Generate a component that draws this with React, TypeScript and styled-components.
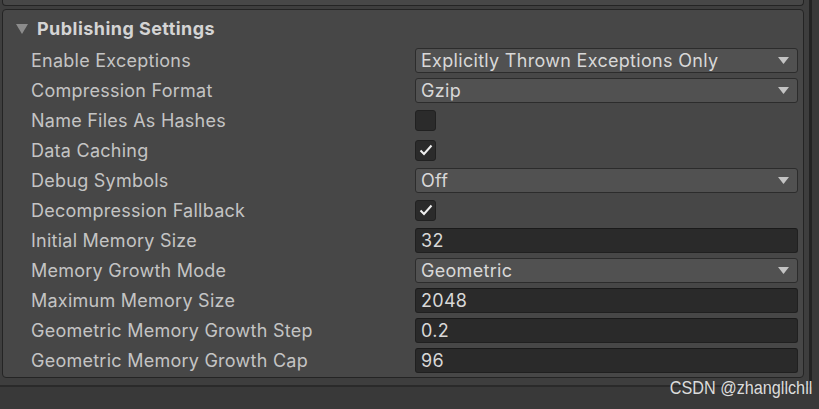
import React from "react";
import styled, { createGlobalStyle } from "styled-components";

const GlobalStyle = createGlobalStyle`
  html, body { margin: 0; padding: 0; background: #393939; }
  body { font-family: Inter, "Noto Sans", sans-serif; }
`;

const Screen = styled.div`
  width: 819px;
  height: 409px;
  background: #393939;
  position: relative;
  overflow: hidden;
`;

const Inspector = styled.div`
  width: 812px;
  height: 387px;
  box-sizing: border-box;
  background: #3e3e3e;
  border-right: 3px solid #232323;
  border-bottom: 2px solid #2a2a2a;
  padding: 0 5px 0 2px;
  display: flex;
  flex-direction: column;
  gap: 3px;
`;

const PrevPanel = styled.div`
  height: 6px;
  box-sizing: border-box;
  background: #474747;
  border: 1px solid #242424;
  border-top: none;
  border-radius: 0 0 4px 4px;
`;

const Panel = styled.div`
  height: 369px;
  box-sizing: border-box;
  background: #474747;
  border: 1px solid #242424;
  border-radius: 4px;
  display: flex;
  flex-direction: column;
`;

const Header = styled.div`
  height: 35px;
  display: flex;
  align-items: center;
  gap: 9px;
  padding: 2px 0 0 13px;
  box-sizing: border-box;
  color: #d4d4d4;
  font-weight: 700;
  font-size: 18px;
  letter-spacing: 0.45px;
`;

const Rows = styled.div`
  display: grid;
  grid-template-columns: 384px 1fr;
  grid-auto-rows: 30px;
  padding: 0 5px 0 28px;
  align-items: center;
`;

const Label = styled.div`
  color: #c4c4c4;
  font-size: 18px;
  letter-spacing: 0.25px;
  white-space: nowrap;
  padding-top: 1px;
`;

const FieldBase = styled.div`
  height: 25px;
  box-sizing: border-box;
  border-radius: 3px;
  display: flex;
  align-items: center;
  font-size: 18px;
  letter-spacing: 0.3px;
  color: #d8d8d8;
`;

const Dropdown = styled(FieldBase)`
  background: #515151;
  border: 1px solid #2c2c2c;
  padding: 1px 8px 0 5px;
  justify-content: space-between;
`;

const TextField = styled(FieldBase)`
  background: #2a2a2a;
  border: 1px solid #202020;
  border-top-color: #1a1a1a;
  padding: 1px 5px 0;
`;

const CheckBox = styled.div`
  width: 21px;
  height: 21px;
  box-sizing: border-box;
  background: #2b2b2b;
  border: 1px solid #212121;
  border-radius: 3px;
  display: flex;
  align-items: center;
  justify-content: center;
`;

const Watermark = styled.div`
  position: absolute;
  right: 7px;
  top: 378px;
  color: #dcdcdc;
  font-family: "Liberation Sans", Arial, sans-serif;
  font-size: 18px;
  line-height: 21px;
  transform: scaleX(0.9);
  transform-origin: right center;
`;

const Arrow = () => (
  <svg width="11" height="7" viewBox="0 0 11 7">
    <path d="M0 0 H11 L5.5 7 Z" fill="#c4c4c4" />
  </svg>
);

const Foldout = () => (
  <svg width="12" height="10" viewBox="0 0 12 10">
    <path d="M0 0 H12 L6 10 Z" fill="#8c8c8c" />
  </svg>
);

const Check = () => (
  <svg width="14" height="12" viewBox="0 0 14 12">
    <path d="M1.5 6.5 L5 10 L12.5 1.5" fill="none" stroke="#f0f0f0" strokeWidth="2" />
  </svg>
);

type Row =
  | { label: string; kind: "dropdown"; value: string }
  | { label: string; kind: "text"; value: string }
  | { label: string; kind: "check"; value: boolean };

const rows: Row[] = [
  { label: "Enable Exceptions", kind: "dropdown", value: "Explicitly Thrown Exceptions Only" },
  { label: "Compression Format", kind: "dropdown", value: "Gzip" },
  { label: "Name Files As Hashes", kind: "check", value: false },
  { label: "Data Caching", kind: "check", value: true },
  { label: "Debug Symbols", kind: "dropdown", value: "Off" },
  { label: "Decompression Fallback", kind: "check", value: true },
  { label: "Initial Memory Size", kind: "text", value: "32" },
  { label: "Memory Growth Mode", kind: "dropdown", value: "Geometric" },
  { label: "Maximum Memory Size", kind: "text", value: "2048" },
  { label: "Geometric Memory Growth Step", kind: "text", value: "0.2" },
  { label: "Geometric Memory Growth Cap", kind: "text", value: "96" },
];

const Field = ({ row }: { row: Row }) => {
  if (row.kind === "dropdown")
    return (
      <Dropdown>
        <span>{row.value}</span>
        <Arrow />
      </Dropdown>
    );
  if (row.kind === "text") return <TextField>{row.value}</TextField>;
  return <CheckBox>{row.value && <Check />}</CheckBox>;
};

export default function App() {
  return (
    <Screen>
      <GlobalStyle />
      <Inspector>
        <PrevPanel />
        <Panel>
          <Header>
            <Foldout />
            <span>Publishing Settings</span>
          </Header>
          <Rows>
            {rows.map((r) => (
              <React.Fragment key={r.label}>
                <Label>{r.label}</Label>
                <Field row={r} />
              </React.Fragment>
            ))}
          </Rows>
        </Panel>
      </Inspector>
      <Watermark>CSDN @zhangllchll</Watermark>
    </Screen>
  );
}
